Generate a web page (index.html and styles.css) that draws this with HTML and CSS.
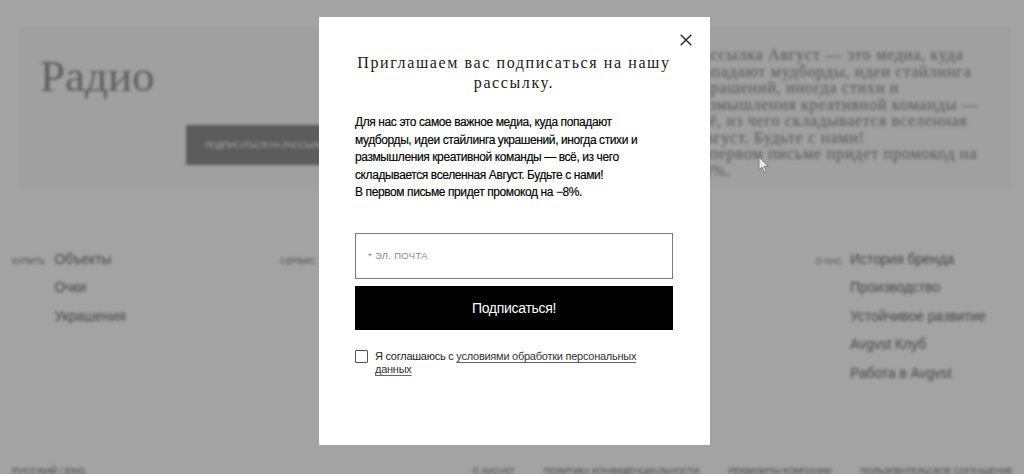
FILE: index.html
```html
<!DOCTYPE html>
<html lang="ru">
<head>
<meta charset="utf-8">
<title>Подписка</title>
<link rel="stylesheet" href="styles.css">
</head>
<body>
<div class="page">
  <section class="hero">
    <div class="hero-left">
      <h1 class="hero-title">Радио</h1>
      <button class="hero-btn" type="button">Подписаться на рассылку</button>
    </div>
    <p class="hero-text">Рассылка Август — это медиа, куда<br>попадают мудборды, идеи стайлинга<br>украшений, иногда стихи и<br>размышления креативной команды —<br>всё, из чего складывается вселенная<br>Август. Будьте с нами!<br>В первом письме придет промокод на<br>−8%.</p>
  </section>
  <footer class="footer">
    <div class="footer-nav">
      <div class="fgroup g1">
        <span class="flabel">Купить</span>
        <ul class="flist">
          <li>Объекты</li>
          <li>Очки</li>
          <li>Украшения</li>
        </ul>
      </div>
      <div class="fgroup g2">
        <span class="flabel">Сервис</span>
        <ul class="flist">
          <li>Доставка и оплата</li>
          <li>Обмен и возврат</li>
          <li>Уход за изделиями</li>
        </ul>
      </div>
      <div class="fgroup g3">
        <span class="flabel">О нас</span>
        <ul class="flist">
          <li>История бренда</li>
          <li>Производство</li>
          <li>Устойчивое развитие</li>
          <li>Avgvst Клуб</li>
          <li>Работа в Avgvst</li>
        </ul>
      </div>
    </div>
    <div class="footer-bottom">
      <span class="lang">Русский / Eng</span>
      <ul class="legal">
        <li>© Avgvst</li>
        <li>Политика конфиденциальности</li>
        <li>Реквизиты компании</li>
        <li>Пользовательское соглашение</li>
      </ul>
    </div>
  </footer>
</div>

<div class="overlay">
  <div class="modal" role="dialog">
    <button class="close" type="button" aria-label="Закрыть">
      <svg width="12" height="12" viewBox="0 0 12 12"><path d="M0.7 0.7 L11.3 11.3 M11.3 0.7 L0.7 11.3" stroke="#222" stroke-width="1.3" fill="none"/></svg>
    </button>
    <h2 class="modal-title">Приглашаем вас подписаться на нашу рассылку.</h2>
    <p class="modal-text">Для нас это самое важное медиа, куда попадают мудборды, идеи стайлинга украшений, иногда стихи и размышления креативной команды — всё, из чего складывается вселенная Август. Будьте с нами!<br>В первом письме придет промокод на −8%.</p>
    <form class="form">
      <input class="email" type="text" placeholder="* Эл. почта">
      <button class="submit" type="button">Подписаться!</button>
      <label class="agree">
        <span class="box"></span>
        <span class="agree-text">Я соглашаюсь с <a href="#">условиями обработки персональных данных</a></span>
      </label>
    </form>
  </div>
</div>

<svg class="cursor" width="12" height="18" viewBox="0 0 12 18"><path d="M1 1 L1 14 L4 11 L6.5 16.5 L8.5 15.6 L6 10.3 L10.2 10.3 Z" fill="#e6e6e6" stroke="#6a6a6a" stroke-width="0.8"/></svg>
</body>
</html>
```
FILE: styles.css
```css
* { box-sizing: border-box; }

html, body {
  margin: 0;
  padding: 0;
  height: 100%;
  overflow: hidden;
}

body {
  background: #ffffff;
  font-family: "Liberation Sans", Arial, sans-serif;
}

ul { list-style: none; margin: 0; padding: 0; }

/* ---------- background page ---------- */
.page {
  filter: blur(1.4px);
}

.hero {
  margin: 27px 14px 0 20px;
  height: 160px;
  background: #fafafa;
  padding: 20px 20px 0 20px;
  display: grid;
  grid-template-columns: 1fr 297px;
}

.hero-title {
  margin: 7px 0 0 0;
  font-family: "Liberation Serif", "Times New Roman", serif;
  font-weight: 400;
  font-size: 45px;
  line-height: 45px;
  color: #949494;
}

.hero-btn {
  display: block;
  margin: 26px 0 0 146px;
  width: 220px;
  height: 40px;
  border: 0;
  background: #909090;
  color: #ffffff;
  font-family: "Liberation Sans", Arial, sans-serif;
  font-size: 8.5px;
  letter-spacing: -0.2px;
  text-transform: uppercase;
  text-align: left;
  padding: 0 0 0 19px;
}

.hero-text {
  margin: 0;
  font-family: "Liberation Serif", "Times New Roman", serif;
  font-size: 16.5px;
  line-height: 16.5px;
  letter-spacing: 0.58px;
  color: #888888;
  white-space: nowrap;
}

.footer {
  padding-top: 58px;
}

.footer-nav {
  display: flex;
  padding: 0 38px 0 12px;
}

.fgroup {
  display: flex;
  align-items: baseline;
  gap: 9px;
}

.g1 { width: 268px; }
.g2 { flex: 1; }
.g3 { gap: 8px; }

.flabel {
  font-size: 8.5px;
  text-transform: uppercase;
  color: #777777;
}

.flist li {
  font-size: 14px;
  line-height: 28.4px;
  color: #707070;
  letter-spacing: -0.1px;
}

.footer-bottom {
  margin-top: 78px;
  display: flex;
  padding: 0 11px 0 12px;
  font-size: 8.5px;
  line-height: 12px;
  text-transform: uppercase;
  color: #666666;
}

.lang { font-size: 9.5px; }

.legal {
  margin-left: auto;
  display: flex;
  gap: 29px;
}

/* ---------- overlay & modal ---------- */
.overlay {
  position: fixed;
  inset: 0;
  background: rgba(0, 0, 0, 0.36);
  display: flex;
  justify-content: center;
  align-items: flex-start;
  padding: 17px 0 0 5px;
}

.modal {
  position: relative;
  width: 391px;
  height: 428px;
  background: #ffffff;
  padding: 36px 37px 0 36px;
}

.close {
  position: absolute;
  top: 17px;
  right: 18px;
  width: 12px;
  height: 12px;
  padding: 0;
  border: 0;
  background: transparent;
  display: block;
}
.close svg { display: block; }

.modal-title {
  margin: 0;
  text-align: center;
  font-family: "Liberation Serif", "Times New Roman", serif;
  font-weight: 400;
  font-size: 16px;
  line-height: 20px;
  letter-spacing: 1.6px;
  color: #1a1a1a;
}

.modal-text {
  margin: 21px 0 0 0;
  max-width: 300px;
  font-size: 12px;
  line-height: 17.6px;
  letter-spacing: -0.4px;
  color: #000000;
  -webkit-text-stroke: 0.15px #000;
}

.form {
  margin-top: 31px;
  display: flex;
  flex-direction: column;
}

.email {
  height: 46px;
  border: 1px solid #7a7a7a;
  padding: 0 12px;
  font-family: "Liberation Sans", Arial, sans-serif;
  font-size: 9.5px;
  outline: none;
}
.email::placeholder {
  color: #8a8a8a;
  text-transform: uppercase;
  letter-spacing: 0.3px;
}

.submit {
  margin-top: 7px;
  height: 44px;
  border: 0;
  background: #000000;
  color: #ffffff;
  font-family: "Liberation Sans", Arial, sans-serif;
  font-size: 14px;
  letter-spacing: -0.3px;
}

.agree {
  margin-top: 20px;
  display: flex;
  align-items: flex-start;
  gap: 7px;
}

.box {
  flex: none;
  width: 13px;
  height: 13px;
  border: 1px solid #555555;
  border-radius: 1px;
}

.agree-text {
  max-width: 290px;
  font-size: 11px;
  line-height: 13.5px;
  letter-spacing: -0.25px;
  color: #1a1a1a;
}

.agree-text a {
  color: #333333;
  text-decoration: underline;
  text-decoration-color: #666666;
  text-underline-offset: 2px;
}

.cursor {
  position: fixed;
  left: 758px;
  top: 156px;
  filter: blur(0.4px);
}
```
